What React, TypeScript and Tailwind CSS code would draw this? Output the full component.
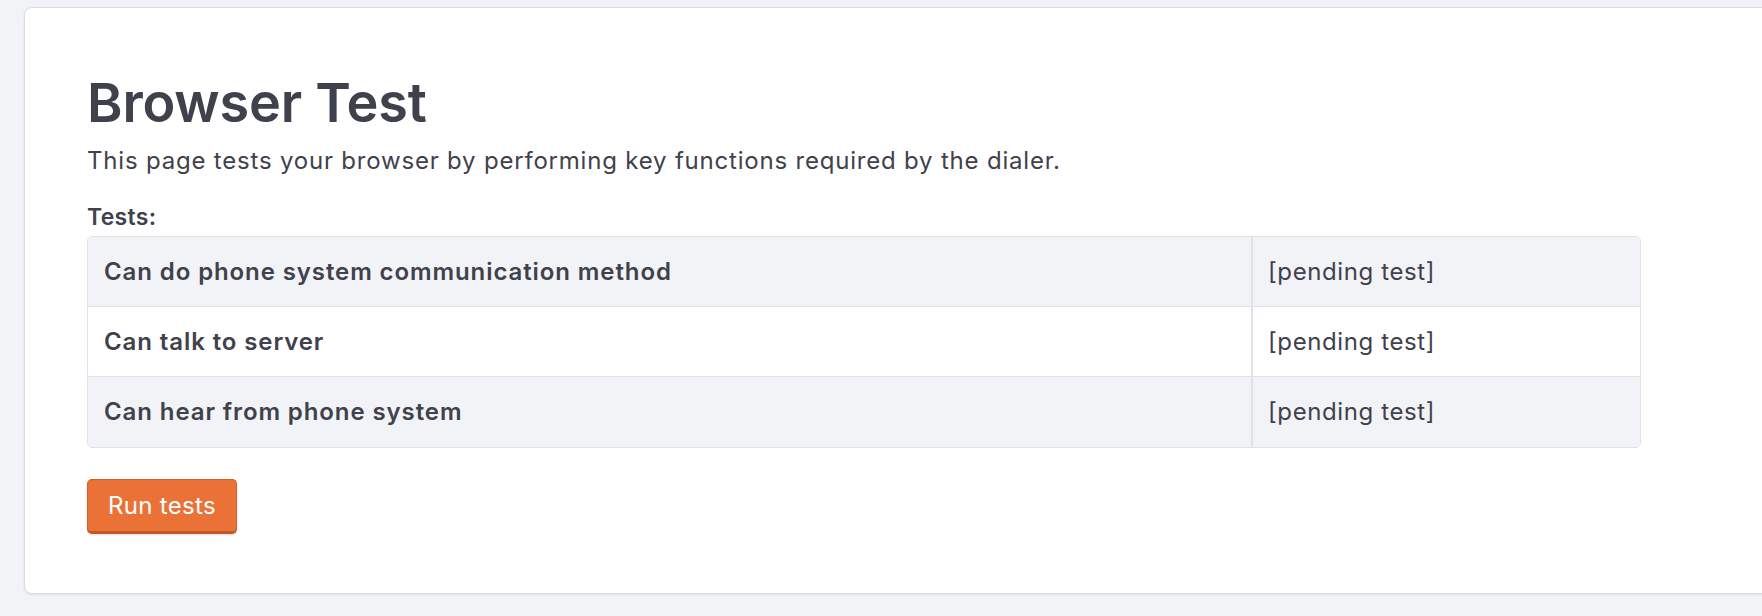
import React from "react";

const rows = [
  "Can do phone system communication method",
  "Can talk to server",
  "Can hear from phone system",
];

export default function App() {
  return (
    <div className="h-[616px] w-full overflow-hidden bg-[#f2f3f7] pl-[24px] pt-[7px] font-['Inter',sans-serif] text-[#3f414d]">
      <div className="w-[1760px] rounded-lg border border-[#dcdde3] bg-white pb-[59px] pl-[62px] pt-[68px] shadow-[0_1px_3px_rgba(0,0,0,0.08)]">
        <h1 className="text-[54px] font-semibold leading-[54px] tracking-[-0.2px]">Browser Test</h1>
        <p className="mt-[15px] text-[24px] leading-[32px] tracking-[0.8px]">
          This page tests your browser by performing key functions required by the dialer.
        </p>
        <div className="mt-[24px] text-[23px] font-semibold leading-[32px] tracking-[0.3px]">Tests:</div>
        <div className="mt-[3px] w-[1554px] overflow-hidden rounded-[5px] border border-[#e1e2e7]">
          {rows.map((r, i) => (
            <div
              key={r}
              className={`flex h-[70px] items-center ${i % 2 === 0 ? "bg-[#f2f3f7]" : "bg-white"} ${i < rows.length - 1 ? "border-b border-[#e1e2e7]" : ""}`}
            >
              <div className="flex h-full w-[1165px] items-center border-r-2 border-[#e1e2e7] pl-[16px] text-[24px] font-semibold tracking-[0.9px]">
                {r}
              </div>
              <div className="pl-[15px] text-[24px] tracking-[0.6px]">[pending test]</div>
            </div>
          ))}
        </div>
        <button className="mt-[31px] flex h-[55px] w-[150px] items-center justify-center rounded-[5px] border border-[#d1612c] border-b-[3px] border-b-[#c2582a] bg-[#ea7237] text-[24px] tracking-[0.3px] text-white shadow-[0_1px_2px_rgba(0,0,0,0.15)]">
          Run tests
        </button>
      </div>
    </div>
  );
}
